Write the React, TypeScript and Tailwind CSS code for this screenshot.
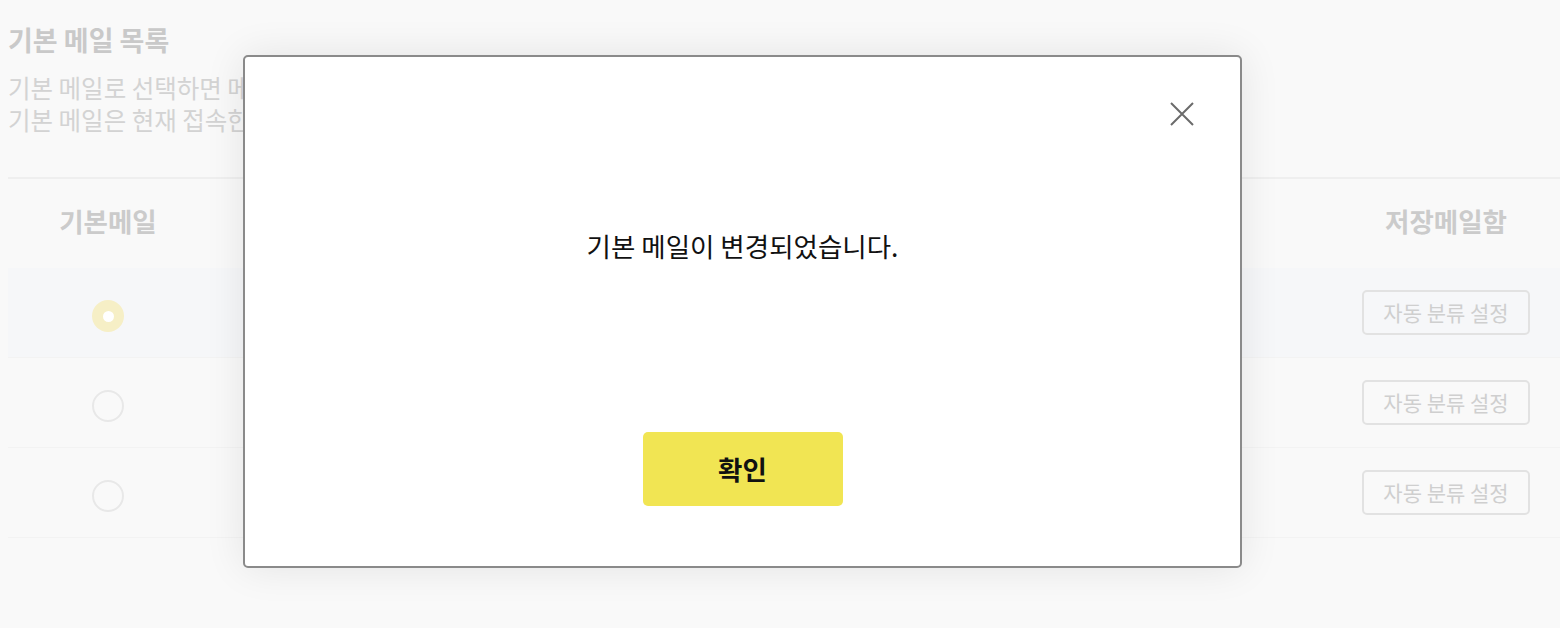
import React from "react";

const font = { fontFamily: '"Noto Sans CJK KR", "Noto Sans", sans-serif' };

function Radio({ checked }: { checked?: boolean }) {
  if (checked) {
    return (
      <div className="w-8 h-8 rounded-full bg-[#f6efc6] flex items-center justify-center">
        <div className="w-[11px] h-[11px] rounded-full bg-white" />
      </div>
    );
  }
  return <div className="w-8 h-8 rounded-full border-2 border-[#e8e8e8]" />;
}

function Row({ checked, highlight }: { checked?: boolean; highlight?: boolean }) {
  return (
    <div
      className={`flex items-center h-[90px] border-b border-[#f3f3f3] ${
        highlight ? "bg-[#f6f7f9]" : ""
      }`}
    >
      <div className="w-[200px] flex justify-center pt-[7px]">
        <Radio checked={checked} />
      </div>
      <div className="flex-1" />
      <div className="w-[228px] flex justify-center">
        <div className="w-[168px] h-[45px] rounded-[5px] border-2 border-[#e2e2e2] flex items-center justify-center text-[21px] text-[#cfcfcf]">
          자동 분류 설정
        </div>
      </div>
    </div>
  );
}

export default function App() {
  return (
    <div className="relative w-[1560px] h-[628px] bg-[#f9f9f9] overflow-hidden" style={font}>
      <div className="pl-2 pt-6">
        <h1 className="text-[27px] leading-[32px] font-bold text-[#c9c9c9]">기본 메일 목록</h1>
        <div className="mt-4 text-[24.5px] leading-[32px] text-[#d3d3d3]">
          <p>기본 메일로 선택하면 메일 발송 시 보내는 사람 주소로 사용됩니다.</p>
          <p>기본 메일은 현재 접속한 계정의 메일 중에서 선택할 수 있습니다.</p>
        </div>
        <div className="mt-[41px] border-t-2 border-[#efefef]">
          <div className="flex items-center h-[89px] pb-[5px] text-[26.5px] font-bold text-[#cbcbcb]">
            <div className="w-[200px] text-center">기본메일</div>
            <div className="flex-1" />
            <div className="w-[228px] text-center">저장메일함</div>
          </div>
          <Row checked highlight />
          <Row />
          <Row />
        </div>
      </div>

      <div className="absolute left-[243px] top-[55px] w-[999px] h-[513px] bg-white border-2 border-[#8a8a8a] rounded-[5px] shadow-[0_0_40px_rgba(0,0,0,0.09)] flex flex-col items-center">
        <button className="absolute right-[46px] top-[45px] w-6 h-6 text-[#6b6b6b]">
          <svg width="24" height="24" viewBox="0 0 24 24" fill="none" stroke="currentColor" strokeWidth="2">
            <path d="M1 1L23 23M23 1L1 23" />
          </svg>
        </button>
        <p className="pt-[173px] text-[26.5px] leading-[32px] text-[#111111]">기본 메일이 변경되었습니다.</p>
        <button className="mt-[170px] w-[200px] h-[74px] rounded-[5px] bg-[#f1e553] text-[26.5px] font-bold text-[#111111]">
          확인
        </button>
      </div>
    </div>
  );
}
